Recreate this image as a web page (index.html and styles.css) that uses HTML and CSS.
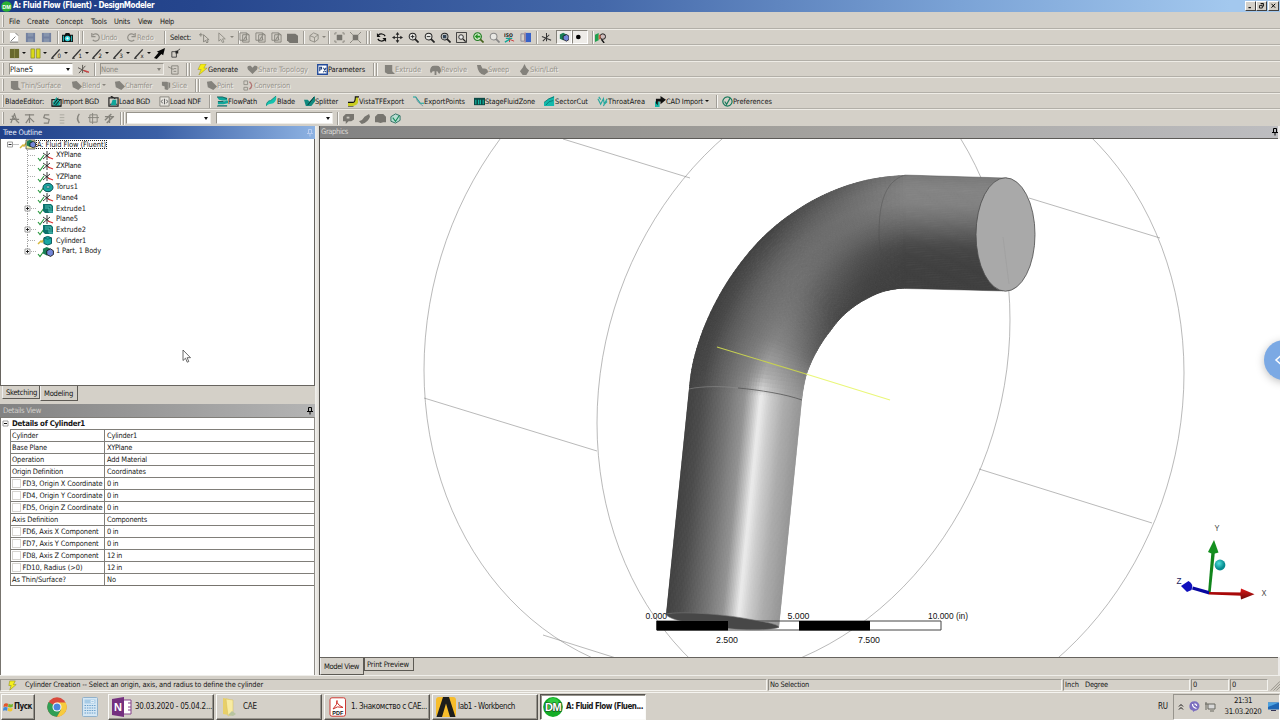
FILE: index.html
```html
<!DOCTYPE html>
<html lang="en">
<head>
<meta charset="utf-8">
<title>A: Fluid Flow (Fluent) - DesignModeler</title>
<link rel="stylesheet" href="styles.css">
</head>
<body>
<div class="window">
  <header class="titlebar">
    <svg class="app-icon" viewBox="0 0 12 12"><circle cx="6" cy="6" r="5.8" fill="#2bb135"/><text x="6" y="8.6" class="dm-small">DM</text></svg>
    <span class="caption" data-w="141">A: Fluid Flow (Fluent) - DesignModeler</span>
    <div class="winbtns">
      <svg viewBox="0 0 11 9"><path d="M3 6.5h3" stroke="#000" stroke-width="1.4"/></svg>
      <svg viewBox="0 0 11 9"><path d="M4.5 1.8h3.5v3h-1M3 4h3.5v3H3zM4.5 1.5h3.5" fill="none" stroke="#000"/></svg>
      <svg class="close" viewBox="0 0 11 9"><path d="M3 1.8l4.6 4.8M7.600 1.800L3 6.600" stroke="#000" stroke-width="1.2"/></svg>
    </div>
  </header>
  <nav class="bar menu" id="menu"></nav>
  <div id="toolbars"></div>

  <main class="work">
    <aside class="side">
      <div class="panel-title active"><span data-w="39">Tree Outline</span><svg class="pin" viewBox="0 0 6 8"><path d="M1.500 .5h3v4M1.500 .5v4M0 4.500h6M3 4.500v3" fill="none" stroke="#b9cdf0"/></svg></div>
      <div class="tree" id="tree"></div>
      <div class="tabs side-tabs"><span class="tab"><b data-w="31">Sketching</b></span><span class="tab on"><b data-w="29">Modeling</b></span></div>
      <div class="panel-title idle"><span data-w="38">Details View</span><svg class="pin" viewBox="0 0 6 8"><path d="M1.500 .5h3v4M1.500 .5v4M0 4.500h6M3 4.500v3" fill="none" stroke="#000"/></svg></div>
      <div class="details"><div class="details-grid" id="details"></div></div>
    </aside>

    <section class="graphics">
      <div class="panel-title gfx"><span data-w="27">Graphics</span><svg class="pin" viewBox="0 0 6 8"><path d="M1.500 .5h3v4M1.500 .5v4M0 4.500h6M3 4.500v3" fill="none" stroke="#000"/></svg></div>
      <svg class="scene" viewBox="320 139 960 518">
        <defs>
          <clipPath id="pipeClip"><path d="M666 614L689 388C693 340 716 297 735 270C778 209 840 177 905 175L1007 178L1020 234L1003 291L905 288.500C866 290 838 321 824 340C812 358 805 375 802 400L779 628C740 616 690 611 666 614Z"/></clipPath>
          <radialGradient id="ball" cx=".4" cy=".35"><stop offset="0" stop-color="#4ee0dc"/><stop offset="1" stop-color="#078c90"/></radialGradient>
          <linearGradient id="red" x2="0" y2="1"><stop offset="0" stop-color="#e01818"/><stop offset="1" stop-color="#6c0808"/></linearGradient>
        </defs>
        <g class="wire">
          <circle r="1" transform="matrix(293 -25 0 334 717 345)"/>
          <circle r="1" transform="matrix(293.500 -25 0 334 890.500 398)"/>
          <path d="M424 398L597 451M563 139L690 178M1029 198L1160 238M979 469L1152 523M543 635L616 658"/>
        </g>
        <g id="pipe" clip-path="url(#pipeClip)"></g>
        <path d="M689 389C702 386 722 386 738 388" class="edge lit"/>
        <path d="M738 388C760 390 785 394 802 400" class="edge"/>
        <path d="M905 175C882 182 879 210 879 235C880 262 890 282 903 288.500" class="edge soft"/>
        <path d="M905 175L1007 178M905 288.500L1003 291" class="edge soft"/>
        <ellipse cx="1005.500" cy="234.500" rx="29.500" ry="56.700" fill="#a9a9a9" stroke="#4b4b4b" stroke-width=".8"/>
        <path d="M1003 237L1009 284" stroke="#9b9b9b" stroke-width=".5"/>
        <path d="M717 347L806 374" stroke="#c6d052" stroke-width="1.100"/>
        <path d="M806 374L890 400" stroke="#eaf77a" stroke-width="1.200"/>
        <path d="M656.500 621h284.500v9h-284.500z" fill="none" stroke="#444"/>
        <path d="M666 614C680 611 722 614 748 619C766 622 777 624 779 627C776 630 748 631 722 628C695 625 668 620 666 614Z" fill="#474747" stroke="#777" stroke-width=".6"/>
        <path d="M657 621h71v9.500h-71zM799 621h71v9.500h-71z"/>
        <g class="scale">
          <text x="645.500" y="619" textLength="21.500" lengthAdjust="spacingAndGlyphs">0.000</text><text x="787.500" y="619" textLength="22" lengthAdjust="spacingAndGlyphs">5.000</text><text x="928" y="619" textLength="40" lengthAdjust="spacingAndGlyphs">10.000 (in)</text>
          <text x="716" y="643" textLength="22" lengthAdjust="spacingAndGlyphs">2.500</text><text x="858" y="643" textLength="22" lengthAdjust="spacingAndGlyphs">7.500</text>
        </g>
        <path d="M1208 593L1211.500 551h3.500L1210.500 594z" fill="#11851c"/><path d="M1214 540L1218.500 552.500Q1213 555 1208 552z" fill="#14901f"/>
        <circle cx="1220" cy="565" r="5.400" fill="url(#ball)"/>
        <path d="M1209 594.500L1192 589.500L1193 586.500L1209 591z" fill="#0808a0"/><path d="M1181 586L1188.500 581Q1194 584 1191.500 590L1187 592z" fill="#1010bd"/>
        <path d="M1209 592L1242 592.500V595.800L1209 594.500z" fill="#a80808"/><path d="M1241 588.500L1254.500 594.200L1241 599.500Q1239.500 594 1241 588.500z" fill="url(#red)"/>
        <g class="axis"><text x="1214.500" y="531" textLength="5" lengthAdjust="spacingAndGlyphs">Y</text><text x="1261.500" y="595.500" textLength="5" lengthAdjust="spacingAndGlyphs">X</text><text x="1176.500" y="584" textLength="5" lengthAdjust="spacingAndGlyphs" class="z">Z</text></g>
      </svg>
      <div class="tabs gfx-tabs"><span class="tab on"><b data-w="35">Model View</b></span><span class="tab"><b data-w="42">Print Preview</b></span></div>
    </section>
  </main>

  <footer class="status">
    <div class="cell s1"><svg viewBox="0 0 12 12"><path d="M3 1h6L7 5h3L3 11l1.500-5H2z" fill="#f5f01c" stroke="#8c8a20" stroke-width=".6"/></svg><span data-w="238">Cylinder Creation -- Select an origin, axis, and radius to define the cylinder</span></div>
    <div class="cell s2"><span data-w="39">No Selection</span></div>
    <div class="cell s3"><span data-w="14">Inch</span><span data-w="23">Degree</span></div>
    <div class="cell s4"><span>0</span></div>
    <div class="cell s5"><span>0</span></div>
    <svg class="grip-corner" viewBox="0 0 12 12"><path d="M2 12L12 2M5 12l7-7M8 12l4-4" stroke="#8c8980"/></svg>
  </footer>

  <footer class="taskbar">
    <div class="task start"><svg viewBox="0 0 12 12"><path d="M1 3Q3 1 5.500 2.500L5 6Q3 5 .5 6z" fill="#e2572b"/><path d="M6 2.500Q9 4 11 2.500L10.500 6Q8 7 5.500 6z" fill="#74b52c"/><path d="M.5 6.500Q3 5.500 5 6.500L4.500 10Q2 9 0 10z" fill="#3f87d8"/><path d="M5.500 6.800Q8 8 10.500 6.800L10 10.200Q8 11.500 5 10z" fill="#f1c52c"/></svg><b data-w="18">Пуск</b></div>
    <div class="quick">
      <svg width="20" height="20" viewBox="-10 -10 20 20"><circle r="9.700" fill="#d94a3c"/><path d="M0 0L-8.400-4.900A9.700 9.700 0 0 0 0 9.700L4.200 2.400z" fill="#2f9f55"/><path d="M0-4.500H8.700A9.700 9.700 0 0 1 0 9.700L4.200 2.400z" fill="#f6cb3f"/><circle r="4.500" fill="#fff"/><circle r="3.500" fill="#4a86dc"/></svg>
      <svg width="16" height="20" viewBox="0 0 16 20"><rect x=".5" y=".5" width="15" height="19" rx="1" fill="#d5e7f4" stroke="#91b2cc"/><path d="M2.500 2.500h11v4h-11z" fill="#a6cbe6"/><path d="M9 3.500h3v2H9z" fill="none" stroke="#fff" stroke-width=".6"/><path d="M2.500 8.500h11M2.500 11h11M2.500 13.500h11M2.500 16h11" stroke="#6aa0cb" stroke-width="1.200" stroke-dasharray="1.500 .9"/></svg>
    </div>
    <div class="task"><svg viewBox="0 0 20 20"><path d="M10 3h9v14h-9z" fill="#fff" stroke="#84408a"/><path d="M16 6h3M16 10h3M16 13h3" stroke="#84408a"/><path d="M0 2l12-2v20L0 18z" fill="#74307f"/><text x="6" y="13.500" class="logo-n">N</text></svg><span data-w="77">30.03.2020 - 05.04.2...</span></div>
    <div class="task"><svg viewBox="0 0 20 20"><path d="M3 1l6 1v16l-6-1z" fill="#e8cf68"/><path d="M6 2l7 1v14l-5 2z" fill="#f8eba2" stroke="#d7bd59" stroke-width=".5"/><path d="M12 14l4 3-3 2-5-1z" fill="#b8c4a0"/></svg><span data-w="14">CAE</span></div>
    <div class="task"><svg viewBox="0 0 20 20"><rect x="2" y=".8" width="15.500" height="18.400" rx="2" fill="#fff" stroke="#cd3934"/><path d="M5 12Q10 7 9 3.500Q8 7 15 10.500Q9 8.500 5 12z" fill="none" stroke="#cf302a"/><text x="9.800" y="17.800" class="logo-pdf">PDF</text></svg><span data-w="76">1. Знакомство с CAE...</span></div>
    <div class="task wb"><svg viewBox="0 0 20 20"><rect width="20" height="20" rx="3" fill="#f7bd2b"/><path d="M7 0h6l6.500 20H14L10 6.500L6 20H.5z" fill="#1d1d1b"/></svg><span data-w="57">lab1 - Workbench</span></div>
    <div class="task pressed"><svg viewBox="0 0 20 20"><circle cx="10" cy="10" r="9.900" fill="#14ad27"/><circle cx="10" cy="7.500" r="6.500" fill="#2fcb40"/><text x="10" y="14" class="logo-dm">DM</text></svg><b data-w="77">A: Fluid Flow (Fluen...</b></div>
    <span class="lang" data-w="10">RU</span>
    <div class="tray">
      <svg width="6" height="8" viewBox="0 0 6 8"><path d="M1 3.500L3 1.500L5 3.500M1 6.500l2-2 2 2" fill="none" stroke="#111"/></svg>
      <svg width="11" height="11" viewBox="0 0 11 11"><path d="M5.500 .3a5 4.800 0 0 1 0 9.600L4 11V9.700a5 4.800 0 0 1 1.500-9.400z" fill="#7c6fc0"/><path d="M3.500 3q0 3.500 4 4.500M5.500 2.800q2 .3 2.200 2.200" fill="none" stroke="#fff" stroke-width="1.200"/></svg>
      <svg width="11" height="11" viewBox="0 0 11 11"><path d="M3 3h7v5H3zM5 10h4M1 1v8M0 3h3" fill="#d8d8d8" stroke="#66665f"/></svg>
      <div class="clock"><span data-w="18">21:31</span><span data-w="37">31.03.2020</span></div>
      <svg width="11" height="9" viewBox="0 0 11 9"><path d="M0 .5h11v7H0z" fill="#1e66b4"/><path d="M0 .5h11L0 5z" fill="#4ea2e0"/><path d="M3 8.500h5" stroke="#335"/></svg>
    </div>
  </footer>
</div>

<svg class="pointer" viewBox="0 0 9 14"><path d="M1 1v10.500l2.500-2.300 1.700 4 1.600-.7-1.700-3.800H8.500z" fill="#fff" stroke="#444" stroke-width=".8"/></svg>
<div class="side-bubble"><svg viewBox="0 0 8 12"><path d="M7 1.500L2 6l5 4.500" fill="none" stroke="#fff" stroke-width="1.500"/></svg></div>
<script src="app.js"></script>
</body>
</html>
```

FILE: styles.css
```css
*, *::before { box-sizing: border-box; }
body { margin: 0; width: 1280px; height: 720px; overflow: hidden; background: #d4d0c8; }
.window { width: 1280px; height: 720px; display: flex; flex-direction: column; font: 7.4px/1 "DejaVu Sans Condensed", "DejaVu Sans", sans-serif; color: #161616; position: relative; }
svg { display: block; flex: none; }
span, b { white-space: pre; }

.titlebar { height: 12px; display: flex; align-items: center; padding-left: 1px; background: linear-gradient(90deg, #1c3c85 0, #26468d 200px, #4468a9 600px, #7ba3d6 960px, #a3c8ee 1230px); color: #fff; flex: none; }
.app-icon { width: 11px; height: 11px; margin-right: 1px; }
.dm-small { font: bold 6px "Liberation Sans", sans-serif; fill: #fff; text-anchor: middle; }
.caption { font-weight: bold; font-size: 8px; }
.winbtns { margin-left: auto; display: flex; padding-right: 1px; }
.winbtns svg { width: 11px; height: 10px; background: #d4d0c8; border: 1px solid; border-color: #fff #404040 #404040 #fff; }
.winbtns .close { margin-left: 1px; }

.bar { height: 16px; display: flex; align-items: center; background: #d4d0c8; border-top: 1px solid #eeece6; border-bottom: 1px solid #b2afa8; padding-left: 9px; flex: none; }
.bar.menu { height: 17px; border-top: 0; padding-top: 2px; }
.bar::before { content: ""; width: 2px; height: 12px; border-left: 1px solid #f4f2ee; border-right: 1px solid #a09d96; margin: 0 5px 0 -7px; flex: none; }
.item { display: flex; align-items: center; height: 14px; flex: none; overflow: visible; }
.item span { padding-top: .6px; }
.item svg { width: 11px; height: 11px; }
.item.off { color: #96938b; }
.item.off span { text-shadow: 1px 1px 0 #efede8; }
.item.off svg { opacity: .85; }
.item.down svg { width: 16px; height: 14px; padding: 1px 2px; background: #eeece8; border: 1px solid; border-color: #85827a #fff #fff #85827a; }
.sep { display: block; width: 2px; height: 13px; border-left: 1px solid #a09d96; border-right: 1px solid #f8f7f4; }
.arrow { width: 0; height: 0; border: 2px solid transparent; border-top: 2.5px solid #111; border-bottom: 0; margin-left: 2px; }
.item.off .arrow { border-top-color: #87847c; }
.combo { height: 12px; background: #fff; display: flex; align-items: center; justify-content: space-between; padding: 0 2px 0 0; font-size: 7.6px; border: 1px solid; border-color: #97948c #efede8 #efede8 #97948c; }
.combo i { display: block; margin-left: auto; border: 2.5px solid transparent; border-top: 3px solid #111; border-bottom: 0; }
.combo.gray { background: #d4d0c8; color: #8d8a83; }
.combo.gray i { border-top-color: #85827b; }
.bar.last { height: 17px; border-bottom: 0; }

.work { height: 549px; display: flex; flex: none; }
.side { width: 319px; padding-right: 4px; display: flex; flex-direction: column; background: linear-gradient(90deg, #d4d0c8 315px, #f2f1ee 315px, #dedbd5); }
.panel-title { height: 13px; display: flex; align-items: center; justify-content: space-between; padding: 0 2px 0 3px; flex: none; font-size: 7.6px; }
.pin { width: 6px; height: 8px; }
.panel-title.active { background: linear-gradient(90deg, #1f3f88, #3b60a6 50%, #8db2e2); color: #e9eefa; }
.panel-title.idle { margin-top: 2px; background: linear-gradient(90deg, #828282, #b4b4b4); color: #d2d0cc; }
.tree { height: 247px; background: #fff; border: 1px solid #67645f; border-top: 0; display: flex; flex-direction: column; }
.node { height: 10.68px; display: flex; align-items: center; padding-left: 6px; flex: none; }
.node svg { width: 26px; height: 11px; margin-right: 2px; overflow: visible; }
.node .lines { width: 21px; margin: 0; }
.node.root .lines { width: 12px; }
.node.root svg + svg { width: 18px; margin-right: 0; }
.node.root span { outline: 1px dotted #222; }
.tabs { display: flex; align-items: flex-start; }
.tab { border: 1px solid #5d5a54; border-top: 0; border-left-color: #eee; background: #d4d0c8; display: flex; align-items: center; }
.tab b { font-weight: normal; font-size: 7.6px; }
.side-tabs { height: 16px; padding-left: 2px; flex: none; }
.side-tabs .tab { height: 13px; padding: 1px 2px 0 3px; }
.side-tabs .on { height: 15px; padding: 2px 4px 0 3px; }
.details { flex: 1; background: #fff; border-left: 1px solid #77746e; border-right: 1px solid #908d87; }
.details-grid { border-bottom: 1px solid #77746e; margin-left: 9px; }
.drow { height: 12px; display: flex; align-items: center; border-top: 1px solid #807e79; border-left: 1px solid #807e79; padding-left: 1px; }
.drow.head { font-weight: bold; margin-left: -9px; border-left: 0; padding-left: 1px; font-size: 7.8px; gap: 3px; }
.drow.head svg { width: 7px; height: 7px; }
.drow .key { width: 93px; height: 11px; display: flex; align-items: center; border-right: 1px solid #807e79; margin-right: 2px; }
.box { width: 9px; height: 9px; border: 1px solid #d6d4d0; margin-right: 1.5px; }

.graphics { flex: 1; display: flex; flex-direction: column; border-left: 1px solid #55534f; border-right: 2px solid #eceae8; }
.panel-title.gfx { background: linear-gradient(90deg, #828282, #a09e9a 45%, #bdbdc0); border-bottom: 1px solid #5c5a57; color: #dcdad6; padding-left: 1px; padding-right: 0; }
.scene { width: 960px; height: 518px; background: #fff; margin-right: -2px; }
.wire { fill: none; stroke: #8a8a8a; stroke-width: .6; }
.wire * { vector-effect: non-scaling-stroke; }
.edge { fill: none; stroke: #555; stroke-width: .8; }
.edge.lit { stroke: #8d8d8d; stroke-width: .6; }
.edge.soft { stroke: #484848; stroke-width: .4; }
.scale text { font: 9px "Liberation Sans", sans-serif; fill: #111; }
.axis text { font: 9.5px "Liberation Sans", sans-serif; fill: #484848; }
.axis .z { fill: #23235c; }
.gfx-tabs { flex: 1; border-top: 1px solid #66635e; background: #d4d0c8; }
.gfx-tabs .tab { height: 13px; padding: 1px 4px 0 2px; border-left-color: #5d5a54; }
.gfx-tabs .on { height: 17px; padding: 2px 4px 0 3px; border-left-color: #eee; }

.status { height: 17px; padding: 3px 0 1px; display: flex; border-top: 1px solid #efeeea; flex: none; }
.cell { border: 1px solid; border-color: #9e9b94 #f4f3ef #f4f3ef #8e8b84; display: flex; align-items: center; padding-left: 1px; }
.cell svg { width: 11px; height: 11px; margin: 0 7px 0 5px; }
.s1 { width: 767px; }
.s2, .s3 { width: 294px; margin-left: 1px; }
.s3 { width: 127px; gap: 6px; }
.s4, .s5 { width: 38px; margin-left: 1px; }
.grip-corner { width: 11px; height: 12px; margin-left: auto; }

.taskbar { height: 28px; border-top: 1px solid #f5f4f0; display: flex; align-items: center; padding-left: 1px; flex: none; }
.task { width: 106px; height: 26px; margin-right: 2px; padding-left: 3px; display: flex; align-items: center; border: 1px solid; border-color: #fafaf8 #55524d #55524d #fafaf8; box-shadow: inset -1px -1px 0 #97948d; font-size: 8px; flex: none; }
.task svg { width: 20px; height: 20px; margin-right: 3px; }
.task.start { width: 34px; padding-left: 1px; margin-right: 12px; }
.task.start svg { width: 11px; height: 12px; margin-right: 0; }
.task.wb svg { margin-right: 2px; }
.task.pressed { background: #fff; border-color: #55524d #fafaf8 #fafaf8 #55524d; box-shadow: inset 1px 1px 0 #97948d; padding-left: 2px; }
.quick { display: flex; gap: 15px; align-items: center; margin-right: 10px; }
.logo-n, .logo-dm { font: bold 11px "Liberation Sans", sans-serif; fill: #fff; text-anchor: middle; }
.logo-dm { stroke: #17471d; stroke-width: 1.2; paint-order: stroke; letter-spacing: -.5px; }
.logo-pdf { font: bold 5.5px "Liberation Sans", sans-serif; fill: #111; text-anchor: middle; }
.lang { margin-left: auto; font-size: 8px; }
.tray { margin-left: 5px; width: 107px; height: 26px; display: flex; align-items: center; padding-left: 4px; gap: 5px; border: 1px solid; border-color: #97948d #fff #fff #97948d; }
.clock { display: flex; flex-direction: column; gap: 2.5px; align-items: center; width: 42px; margin-left: 1px; font-size: 7.8px; flex: none; }
.tray > svg:last-child { margin-left: -1px; }

.pointer { position: absolute; left: 182px; top: 349px; width: 9px; height: 14px; }
.side-bubble { position: absolute; right: -24px; top: 340px; width: 40px; height: 40px; border-radius: 50%; background: #7ba9e4; box-shadow: 0 2px 8px rgba(0,0,0,.25); }
.side-bubble svg { position: absolute; left: 10px; top: 14px; width: 8px; height: 12px; }
```

FILE: app.js
```js
const stroke = (d, c = '#222', w = 1, f = 'none') => `<path d="${d}" fill="${f}" stroke="${c}" stroke-width="${w}"/>`;
const fill = (d, c) => `<path d="${d}" fill="${c}"/>`;
const lens = (c, inner) => `<circle cx="5" cy="5" r="3.700" fill="#e8e8e4" stroke="${c}" stroke-width="1.100"/>` + stroke('M7.800 7.800L11.500 11.500', c, 1.800) + inner;
const pen = n => stroke('M1 11L9.500 1.500', '#333', 1.500) + stroke('M0 11.300h3', '#333') + `<text x="7" y="11" font-size="6.500" fill="#111">${n}</text>`;
const cyl = 'M2 3Q6 0 10 3V9Q6 12 2 9z';
const G = '#85837c', T = '#10a69a';

const ICONS = {
  fresh: fill('M1 1h6l3 3v7H1z', '#fff') + stroke('M7 1l3 3M2 10l5-5M1 11h9', '#777'),
  save: fill('M1 1h10v10H1z', '#7381a0') + fill('M3 1h6v4H3zM3 7h6v4H3z', '#8795ad'),
  camera: fill('M0 3h3l1-2h4l1 2h3v8H0z', '#111') + `<circle cx="6" cy="7" r="3" fill="#38d6dd"/><circle cx="6" cy="7" r="1.200" fill="#fff"/>` + fill('M1 4h1v6H1zM10 4h1v6h-1z', '#2cc'),
  undo: stroke('M3 8.500A4 4 0 1 0 3 3.500M2 1v4h4', G, 1.300),
  redo: stroke('M9 8.500A4 4 0 1 1 9 3.500M10 1v4H6', G, 1.300),
  curPlus: stroke('M5 3v8l2-2 1.500 3L10 11 8.500 8.500H11zM0 3h4M2 1v4', G),
  cur: stroke('M2 1v9l2-2 2 3.500L7.500 11 6 7.500H9z', G),
  cubeA: stroke('M1 1h7v8H1zM4 3h7v8H4zM8 1l3 2', G) + stroke('M5 9l2-4 2 4', G),
  cubeF: fill('M0 2h9l3 2v8H3L0 9z', '#77756f'),
  cubeD: stroke('M1 4l4-3 5 2v5l-4 3-5-2zM1 4l5 2v5M6 6l4-3', G),
  expand: fill('M3 3h6v6H3z', '#77756f') + stroke('M1 3V1h2M9 1h2v2M11 9v2H9M3 11H1V9', G),
  shrink: fill('M3 3h6v6H3z', '#77756f') + stroke('M0 0l3 3M12 0L9 3M12 12L9 9M0 12l3-3', G),
  rotate: stroke('M10 4.500A4.500 4 0 0 0 2.500 3.500M2 7.500A4.500 4 0 0 0 9.500 8.500', '#111', 1.300) + fill('M1 1v4.500h4zM11 11V6.500H7z', '#111'),
  pan: stroke('M6 2v8M2 6h8', '#333') + fill('M6 0l2 3H4zM6 12l2-3H4zM0 6l3-2v4zM12 6L9 4v4z', '#222'),
  zin: lens('#222', stroke('M3 5h4M5 3v4', '#222')),
  zout: lens('#222', stroke('M3 5h4', '#222')),
  zbox: lens('#222', fill('M3 3h4v4H3z', '#345')),
  zfit: stroke('M.5.500h11v11H.5z', '#333') + `<circle cx="5.500" cy="5.500" r="2.500" fill="#eee" stroke="#222"/>` + stroke('M7.500 7.500l3 3', '#222', 1.500),
  zgreen: `<circle cx="5" cy="5" r="4.200" fill="#cfe8c8" stroke="#237c23" stroke-width="1.200"/>` + fill('M5 2v2h3v2H5v2L2 5z', '#1f921f') + stroke('M8 8l3.500 3.500', '#46631c', 1.800),
  zgray: lens('#888', ''),
  iso: `<text x="0" y="5" font-size="5.500" font-weight="bold" fill="#222">ISO</text>` + stroke('M6 6v5M6 8l5 2', '#c33') + stroke('M6 8L1 11M2 7h7', T, 1.500),
  split: fill('M6 1h6v10H6z', '#3862c8') + stroke('M1 2h4v8H1z', '#889', 1) + stroke('M5.500 0v12', '#b77', .7),
  axis: stroke('M6 1v9M1 5l10 4M2 10l7-7', '#333', 1.100),
  cubes: fill('M1 3l4-2 4 2v5L5 10 1 8z', '#1a7e55') + fill('M5 5l4-2 3 2v4l-3 2-4-2z', '#7386d8') + stroke('M5 5l4-2 3 2v4l-3 2-4-2z', '#111', .9),
  dot: `<circle cx="4" cy="6" r="2.800" fill="#000"/>`,
  look: fill('M0 3l4-2v8l-4 2z', '#1ea04e') + `<circle cx="8.500" cy="5" r="3" fill="#cbb" stroke="#111"/>` + stroke('M7 8l3 4', '#111', 1.500) + fill('M4 3h2v5H4z', '#c64'),
  olive: fill('M1 1h10v10H1z', '#68692d') + stroke('M6 1v10', '#8a8b47'),
  yellow: fill('M1 1h4v10H1zM7 1h4v10H7z', '#d9da18') + stroke('M1 1h4v10H1zM7 1h4v10H7z', '#8a8b2c', .8),
  p0: pen(0), p1: pen(1), p2: pen(2), p3: pen(3), px: pen('x'),
  north: fill('M12 0l-2 8-2-1.500L3 12 0 11l5-6-2-1z', '#050505'),
  corner: stroke('M2 4h5v6H2zM7 4l4-3', '#333', .9) + fill('M6 3h3v3H6z', '#222'),
  plane: stroke('M5 1v9M0 4l10 5M1 10l7-8', '#55514c') + stroke('M6 7l6 2', '#c44', 1.500),
  planeG: stroke('M4 2h7v9H4zM0 3l6 3M6 5h3M6 8h3', G),
  bolt: fill('M4 0h6L7.500 4.500H11L2 12l2.500-6H1z', '#f5ec11') + stroke('M4 0h6L7.500 4.500H11L2 12l2.500-6H1z', '#908d26', .5),
  heart: fill('M6 11L1 6Q-1 1 4 2l2 2 2-2q5-1 3 4z', '#77756f'),
  params: stroke('M.8.800h10.400v10.400H.8z', '#224a9a', 1.500, '#fff') + stroke('M3 8V3.500h2v2H3M7 4l3 5M10 4L7 9', '#163878', 1.100),
  ext: fill('M1 1h8v7l3 3H4L1 9z', '#77756f'),
  rev: fill('M0 8Q0 1 6 2q6-1 6 6l-2 3-2-3H7v4H5V8H3l-2 2z', '#77756f'),
  swp: fill('M0 1h4l2 4q6-1 6 4l-4 3Q1 11 0 1z', '#77756f'),
  slice: fill('M1 2h5l4 1v5l-3 3-3-1V7L1 6z', '#77756f') + stroke('M8 2v8', '#b5b2ab', .8),
  skn: fill('M6 0l2 4 3 3-3 5H4L1 8l3-4z', '#77756f'),
  dia: fill('M1 2l5-1 6 6-4 4-6-3z', '#77756f'),
  conv: stroke('M1 1h4v4H1zM1 8h4v3H1z', G) + stroke('M7 2q5 4 0 8', '#a66', 1.500),
  bgd: stroke('M1 4h10v7H1z', '#222', 1.300) + fill('M2 7l4-6 4 6-1 4H3z', T) + stroke('M3 9L8 2M5 10l5-6M1 11h10', '#111'),
  lbgd: stroke('M1 2h10v9H1zM3 0l5 3M2 9h8', '#222', 1.300) + fill('M5 4h4v6H3z', T),
  ndf: stroke('M1 1h10v10H1z', G, 1, '#e7e5df') + stroke('M4 4L2.500 6 4 8M8 4l1.500 2L8 8M6 3v6', '#555'),
  flow: fill('M0 1h6l5 1v3H6L2 4zM1 6h6l5-1v3L7 9H1zM1 10h10v1H1z', T) + stroke('M0 1h6l5 2M1 6h6M0 11h11', '#155', .9),
  blade: fill('M0 11q1-6 5-6l6-5q1 5-3 8l-5 1z', '#15c3ae') + stroke('M0 11q1-6 5-6l6-5', '#087d73', .8),
  splitter: fill('M0 4h4l2 2L12 0v6L8 11H2z', '#11897e') + stroke('M4 10l7-9', '#033'),
  vista: fill('M0 7h5q3 0 3-6h3v6q-2 5-11 4z', '#c9cc20') + stroke('M0 7h5q3 0 3-6h4M0 12h6', '#111', 1.200),
  points: stroke('M0 1h3l5 7h4', T, 1.100) + stroke('M3 1l2 5 6 5', '#689', .8),
  stage: fill('M0 2h12v8H0z', '#0c4944') + stroke('M2 4v5M5 4v5M7 4v5M10 4v5', '#15b8a4', 1.200),
  sector: fill('M0 11V7l5-4 6-3v11z', '#13b9ac') + stroke('M0 7q5-5 11-6M2 10q3-5 8-5', '#0a6a64', .8),
  throat: stroke('M1 3l3 6 3-6 1 6 3-3M2 1l2 3M7 11l4-8', '#2aa89e', 1.300),
  cad: fill('M0 6h5v6H0z', '#17b6a6') + fill('M1 3h5V0l6 4-6 5V6H3v4L1 8z', '#111'),
  pref: stroke('M6 1a5 5 0 1 1-.1 0M3 6l2 3 4-7', '#197a5c', 1.300),
  g1: stroke('M2 11L6 1l3 9M1 7h10M3 3l8 8', G, 1.300),
  g2: stroke('M6 1v10M1 2h10M2 11l4-6 5 5', G, 1.300),
  g3: stroke('M9 2H4L3 5l6 2-1 4H3', G, 1.300),
  g4: stroke('M3 2h5M3 5h5M3 8h5M3 11h5', '#aaa79f'),
  g5: stroke('M8 1Q4 6 8 11', G, 1.500),
  g6: stroke('M2 2h8v8H2zM0 5h12M5 0v12', G),
  g7: stroke('M1 8L8 1M3 11l7-7M1 4h10M6 2v9', G, 1.500),
  s1: fill('M0 4l3-3h9v6L9 9H6l-3 3V9H0z', '#77756f') + fill('M4 4h3v2H4z', '#c9c6be'),
  s2: fill('M0 9q4-1 6-5l5-3 1 3q-2 6-9 8z', '#77756f'),
  s3: fill('M0 4l3-3h6l3 3v6H9l-3 1-3-1H0z', '#77756f'),
  s4: stroke('M1 4l5-3 5 2v5l-5 3-5-2z', '#2c6e62', 1, '#b9ddd2') + stroke('M3 5l3 4 4-6', '#168a5a', 1.200)
};
const icon = n => `<svg viewBox="0 0 12 12">${ICONS[n]}</svg>`;

/* Toolbar entries: [left, icon, label, label width, flags]; flags: o=disabled a=arrow d=pressed */
const BARS = [
  [[9,'fresh'],[25,'save'],[41,'save'],[57,'|'],[62,'camera'],[78,'|'],[82,'|'],[90,'undo','Undo',16,'o'],[126,'redo','Redo',17,'o'],[164,'|'],[170,'','Select:',21],[199,'curPlus'],[217,'cur','',0,'oa'],[238,'|'],[239,'cubeA'],[255,'cubeA'],[271,'cubeA'],[287,'cubeF'],[303,'|'],[309,'cubeD','',0,'oa'],[328,'|'],[334,'expand'],[350,'shrink'],[366,'|'],[369,'|'],[376,'rotate'],[392,'pan'],[408,'zin'],[424,'zout'],[440,'zbox'],[456,'zfit'],[473,'zgreen'],[489,'zgray'],[504,'iso'],[520,'split'],[536,'|'],[541,'axis'],[556,'cubes','',0,'d'],[572,'dot','',0,'d'],[592,'|'],[595,'look']],
  [[9,'olive','',0,'a'],[30,'yellow','',0,'a'],[51,'p0','',0,'a'],[72,'p1','',0,'a'],[92,'p2','',0,'a'],[113,'p3','',0,'a'],[134,'px','',0,'a'],[154,'north'],[170,'corner']],
  [[9,'combo','Plane5',23,'',64],[78,'plane'],[94,'|'],[100,'combo','None',17,'g',64],[168,'planeG'],[186,'|'],[189,'|'],[197,'bolt','Generate',30],[247,'heart','Share Topology',50,'o'],[317,'params','Parameters',37],[373,'|'],[376,'|'],[384,'ext','Extrude',26,'o'],[430,'rev','Revolve',26,'o'],[477,'swp','Sweep',21,'o'],[519,'skn','Skin/Loft',28,'o']],
  [[10,'ext','Thin/Surface',40,'o'],[71,'dia','Blend',18,'oa'],[114,'dia','Chamfer',27,'o'],[161,'slice','Slice',15,'o'],[195,'|'],[198,'|'],[206,'dia','Point',16,'o'],[243,'conv','Conversion',36,'o']],
  [[5,'','BladeEditor:',39],[51,'bgd','Import BGD',37],[108,'lbgd','Load BGD',31],[159,'ndf','Load NDF',31],[209,'|'],[217,'flow','FlowPath',29],[266,'blade','Blade',18],[304,'splitter','Splitter',23],[348,'vista','VistaTFExport',45],[413,'points','ExportPoints',41],[474,'stage','StageFluidZone',50],[544,'sector','SectorCut',33],[597,'throat','ThroatArea',37],[655,'cad','CAD Import',37,'a'],[716,'|'],[722,'pref','Preferences',39]],
  [[9,'g1'],[24,'g2'],[41,'g3'],[57,'g4'],[72,'g5'],[88,'g6'],[104,'g7'],[120,'|'],[123,'|'],[126,'combo','',0,'',85],[216,'combo','',0,'',117],[337,'|'],[343,'s1'],[359,'s2'],[375,'s3'],[390,'s4']]
];
const lbl = (t, w) => `<span${w ? ` data-w="${w}"` : ''}>${t}</span>`;

document.getElementById('toolbars').innerHTML = BARS.map((bar, n) => {
  const lead = bar[0][0] - 9;
  return `<div class="bar${n === 5 ? ' last' : ''}">` + bar.map((it, i) => {
    const [x, ic, text, w, fl = '', cw] = it;
    const width = (bar[i + 1] ? bar[i + 1][0] : x + 80) - x;
    const shift = i === 0 && lead ? `;margin-left:${lead}px` : '';
    let body;
    if (ic === '|') body = '<i class="sep"></i>';
    else if (ic === 'combo') body = `<div class="combo${fl === 'g' ? ' gray' : ''}" style="width:${cw}px">${lbl(text, w)}<i></i></div>`;
    else body = (ic ? icon(ic) : '') + (text ? lbl(text, w) : '') + (fl.includes('a') ? '<i class="arrow"></i>' : '');
    return `<div class="item${fl.includes('o') ? ' off' : ''}${fl.includes('d') ? ' down' : ''}" style="width:${width}px${shift}">${body}</div>`;
  }).join('') + '</div>';
}).join('');

document.getElementById('menu').innerHTML = [['File',11,18],['Create',22,29],['Concept',27,35],['Tools',16,23],['Units',16,24],['View',14,22],['Help',14,30]]
  .map(([t, w, step]) => `<div class="item" style="width:${step}px">${lbl(t, w)}</div>`).join('');

const tick = stroke('M1 8l2 2.500L7 5', '#24963a', 1.100);
const flash = stroke('M1 9l3-3 1 1 3-4', '#d6b83a', 1.500);
const TREE_ICONS = {
  plane: stroke('M10 1v9M6 3l7 5M6 9l7-6', '#222', .9) + stroke('M11 7l5 2', '#d33', 1.300),
  torus: `<ellipse cx="11" cy="5.500" rx="5" ry="4.200" fill="#18a6a0" stroke="#0b4e55"/><ellipse cx="11" cy="5" rx="2" ry="1" fill="#d9ffff" stroke="#0b4e55" stroke-width=".7"/>`,
  ext: fill('M6 1h8l2 2v7H8L6 8z', '#0b716b') + stroke('M8 3h6v6M8 5h4v4h4', '#61d2c8', .8),
  cyl: `<g transform="translate(5 0) scale(.95)">${stroke(cyl, '#0b5558', 1, '#17a7a2') + stroke('M2 3q4 3 8 0', '#0b5558', .7)}</g>`,
  body: `<g transform="translate(5 0) scale(.95)">${ICONS.cubes}</g>`
};
const TREE = [['XYPlane','plane',25],['ZXPlane','plane',25],['YZPlane','plane',25],['Torus1','torus',22],['Plane4','plane',22],['Extrude1','ext',30,1],['Plane5','plane',22],['Extrude2','ext',30,1],['Cylinder1','cyl',30],['1 Part, 1 Body','body',45,1]];
const square = (x, plus) => `<path d="M${x} 3h5v5h-5z" fill="#fff" stroke="#888" stroke-width=".8"/>` + stroke(`M${x + 1} 5.500h3` + (plus ? `M${x + 2.5} 4v3` : ''), '#111', .9);
document.getElementById('tree').innerHTML =
  `<div class="node root"><svg class="lines" viewBox="0 0 12 11">${stroke('M6 5.500h6', '#aaa', .7) + square(.5, 0)}</svg><svg viewBox="0 0 18 11">${flash}<g transform="translate(7 0)">${stroke('M0 1h9v9H0z', '#333', .7, '#f2eca4')}<g transform="scale(.8)">${ICONS.cubes}</g></g></svg>${lbl('A: Fluid Flow (Fluent)', 69)}</div>` +
  TREE.map(([t, ic, w, plus], i) => `<div class="node"><svg class="lines" viewBox="0 0 21 11"><path d="M20.500 0V${i === 9 ? 5.5 : 11}" stroke="#888" stroke-width=".8" stroke-dasharray="1 1"/>${plus ? square(18, 1) : ''}</svg><svg viewBox="0 0 26 11"><path d="M${plus ? 3 : 0} 5.500h${plus ? 5 : 8}" stroke="#999" stroke-width=".8" stroke-dasharray="1 1"/><g transform="translate(9 0)">${t === 'Cylinder1' ? flash : tick}${TREE_ICONS[ic]}</g></svg>${lbl(t, w)}</div>`).join('');

const ROWS = [['Cylinder','Cylinder1',26,30],['Base Plane','XYPlane',35,25],['Operation','Add Material',32,40],['Origin Definition','Coordinates',51,39],['+FD3, Origin X Coordinate','0 in',80,11],['+FD4, Origin Y Coordinate','0 in',80,11],['+FD5, Origin Z Coordinate','0 in',80,11],['Axis Definition','Components',46,40],['+FD6, Axis X Component','0 in',76,11],['+FD7, Axis Y Component','0 in',76,11],['+FD8, Axis Z Component','12 in',76,15],['+FD10, Radius (>0)','12 in',60,15],['As Thin/Surface?','No',54,9]];
document.getElementById('details').innerHTML =
  `<div class="drow head"><svg viewBox="0 0 7 7"><path d="M1 1h5v5H1z" fill="#fff" stroke="#888" stroke-width=".8"/><path d="M2 3.500h3" stroke="#111"/></svg>${lbl('Details of Cylinder1', 73)}</div>` +
  ROWS.map(([k, v, kw, vw]) => `<div class="drow"><div class="key">${k[0] === '+' ? '<i class="box"></i>' : ''}${lbl(k.replace('+', '').replace('>', '&gt;'), kw)}</div>${lbl(v, vw)}</div>`).join('');

/* Letter spacing brings each label to its nominal width */
document.querySelectorAll('[data-w]').forEach(el => {
  el.style.flex = 'none';
  const natural = el.getBoundingClientRect().width;
  el.style.letterSpacing = ((el.dataset.w - natural) / el.textContent.length).toFixed(3) + 'px';
});

/* Shaded pipe: grey levels by section (rows) and position across the tube (columns) */
const KNOTS = [0, .12, .25, .38, .5, .58, .64, .72, .85, 1];
const SHADES = [
  [0, [66,76,98,122,148,196,236,206,172,150]],
  [.1, [66,72,94,114,132,154,172,168,152,134]],
  [.25, [64,72,92,108,120,128,132,130,118,98]],
  [.5, [66,82,100,110,112,108,103,96,84,72]],
  [.75, [92,106,113,110,100,91,84,78,70,66]],
  [1, [122,132,130,114,94,80,72,67,64,64]]
];
const OUTER = [[689,388],[694,357],[710,312],[735,270],[767,233],[805,205],[840,188],[873,178.5],[905,175]];
const INNER = [[802,400],[806,376],[814,357],[824,340],[838,321],[852,308],[868,298],[885,291],[905,288.5]];
const mix = (a, b, t) => a + (b - a) * t;
const across = (row, s) => { let i = 0; while (i < 8 && KNOTS[i + 1] < s) i++; return mix(row[i], row[i + 1], (s - KNOTS[i]) / (KNOTS[i + 1] - KNOTS[i])); };
const shade = (t, s) => { let i = 0; while (i < 4 && SHADES[i + 1][0] < t) i++; const [t0, a] = SHADES[i], [t1, b] = SHADES[i + 1]; return mix(across(a, s), across(b, s), (t - t0) / (t1 - t0)); };
const spline = (p, t) => {
  const u = t * 8, i = Math.min(7, Math.floor(u)), f = u - i;
  const q = [p[Math.max(0, i - 1)], p[i], p[i + 1], p[Math.min(8, i + 2)]];
  return [0, 1].map(k => .5 * (2 * q[1][k] + (q[2][k] - q[0][k]) * f + (2 * q[0][k] - 5 * q[1][k] + 4 * q[2][k] - q[3][k]) * f * f + (3 * q[1][k] - q[0][k] - 3 * q[2][k] + q[3][k]) * f * f * f));
};
const lerp = (a, b, s) => [mix(a[0], b[0], s), mix(a[1], b[1], s)];
const quads = [];
const strip = (o0, i0, o1, i1, t, n) => {
  for (let j = 0; j < n; j++) {
    const g = Math.round(shade(t, (j + .5) / n));
    const pts = [lerp(o0, i0, j / n), lerp(o0, i0, (j + 1) / n), lerp(o1, i1, (j + 1) / n), lerp(o1, i1, j / n)];
    quads.push(`<polygon points="${pts.map(p => p.map(v => v.toFixed(1)).join()).join(' ')}" fill="rgb(${g},${g},${g})" stroke="rgb(${g},${g},${g})"/>`);
  }
};
strip([905,175], [905,288.5], [1020,178.5], [1020,291.5], 1, 60);
for (let i = 59; i >= 0; i--) strip(spline(OUTER, i / 60), spline(INNER, i / 60), spline(OUTER, (i + 1) / 60), spline(INNER, (i + 1) / 60), (i + .5) / 60, 44);
strip([665.5,619], [778,638], [689,388], [802,400], 0, 70);
document.getElementById('pipe').innerHTML = quads.join('');
```
